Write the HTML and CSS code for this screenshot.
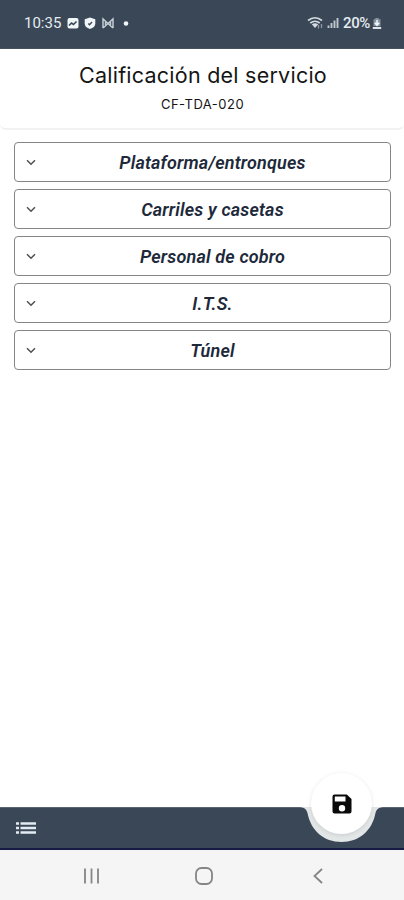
FILE: index.html
```html
<!DOCTYPE html>
<html lang="es">
<head>
<meta charset="utf-8">
<title>Calificación del servicio</title>
<link rel="stylesheet" href="styles.css">
</head>
<body>
<div class="screen">
  <div class="status">
    <span class="clock">10:35</span>
    <svg class="notices" width="66" height="14" viewBox="0 0 66 14">
      <rect x="1.500" y="2" width="11" height="10.500" rx="2" fill="#f0f5f8"/>
      <path d="M3 9.500l2.500-2.500 2 1.500 3-3" fill="none" stroke="#394757" stroke-width="1.600"/>
      <path d="M24 1.500l5.300 1.800v4c0 3-2 4.800-5.300 5.700-3.300-.9-5.300-2.700-5.300-5.700v-4z" fill="#f0f5f8"/>
      <path d="M22.300 7.500l1.200 1.300L26 6" fill="none" stroke="#394757" stroke-width="1.400"/>
      <path d="M37 12V3l5 4.500L47 3v9M37 12l5-4.500 5 4.500M39.500 11V5M44.500 11V5" fill="none" stroke="#c3ccd3" stroke-width="1.500"/>
      <circle cx="60" cy="7.500" r="2.300" fill="#f0f5f8"/>
    </svg>
    <svg class="signal" width="34" height="14" viewBox="0 0 34 14">
      <g fill="none" stroke="#d4dce1" stroke-width="1.700">
        <path d="M1 4.500Q8-1 15 4.500M3.300 7Q8 3.500 12.700 7"/>
      </g>
      <path d="M4.800 8.300Q8 6.200 11.200 8.300L8 12z" fill="#d4dce1"/>
      <path d="M11.500 12.500V9M14.500 8v4" stroke="#8d9aa5" stroke-width="1.300"/>
      <path d="M21.500 12V9.500M24.500 12V7M27.500 12V4.500M30.500 12V2" stroke="#bec8cf" stroke-width="1.900"/>
    </svg>
    <span class="level">20%</span>
    <svg class="battery" width="10" height="13" viewBox="0 0 10 13">
      <path d="M3.300 1h3.400v1.200H8.500v7h-7v-7h1.800z" fill="#8794a0"/>
      <path d="M5 3v5M2.800 5.800L5 8.300l2.200-2.500" fill="none" stroke="#f0f5f8" stroke-width="1.600"/>
      <path d="M.8 11h8.400" stroke="#dfe5e9" stroke-width="2"/>
    </svg>
  </div>
  <header class="header">
    <h1 class="title">Calificación del servicio</h1>
    <p class="code">CF-TDA-020</p>
  </header>
  <main class="list">
    <div class="item"><svg class="chevron" width="10" height="7" viewBox="0 0 10 7"><path d="M1 1.200l4 4 4-4"/></svg><span class="label">Plataforma/entronques</span></div>
    <div class="item"><svg class="chevron" width="10" height="7" viewBox="0 0 10 7"><path d="M1 1.200l4 4 4-4"/></svg><span class="label">Carriles y casetas</span></div>
    <div class="item"><svg class="chevron" width="10" height="7" viewBox="0 0 10 7"><path d="M1 1.200l4 4 4-4"/></svg><span class="label">Personal de cobro</span></div>
    <div class="item"><svg class="chevron" width="10" height="7" viewBox="0 0 10 7"><path d="M1 1.200l4 4 4-4"/></svg><span class="label">I.T.S.</span></div>
    <div class="item"><svg class="chevron" width="10" height="7" viewBox="0 0 10 7"><path d="M1 1.200l4 4 4-4"/></svg><span class="label">Túnel</span></div>
  </main>
  <footer class="bar">
    <svg class="menu" width="20" height="12" viewBox="0 0 20 12">
      <path d="M0 1.500h3M0 6h3M0 10.500h3M4.500 1.500H20M4.500 6H20M4.500 10.500H20" stroke="#e4eaf2" stroke-width="2.300"/>
    </svg>
    <svg class="notch" width="90" height="42" viewBox="0 0 90 42">
      <path d="M3 0C8 .5 9.500 2.500 10.500 6C14 24 27 35 44.500 35S75 24 78.500 6C79.500 2.500 81 .5 86 0z" fill="#e3e6e7"/>
    </svg>
    <button class="save" aria-label="Guardar">
      <svg width="20" height="20" viewBox="0 0 20 20">
        <path fill="#090909" fill-rule="evenodd" d="M2.500.5h12.300L19.500 5v12.500a2 2 0 0 1-2 2h-15a2 2 0 0 1-2-2v-15a2 2 0 0 1 2-2zM2.800 2.500v5h10.700v-5zM10 11a3.200 3.200 0 1 0 0 6.400 3.200 3.200 0 0 0 0-6.400z"/>
      </svg>
    </button>
  </footer>
  <nav class="nav">
    <svg width="18" height="18" viewBox="0 0 18 18"><path d="M2 1.500v15M8.500 1.500v15M15 1.500v15"/></svg>
    <svg class="home" width="20" height="20" viewBox="0 0 20 20"><rect x="2" y="2" width="16" height="16" rx="5.500"/></svg>
    <svg width="12" height="18" viewBox="0 0 12 18"><path d="M10 2L2.500 9l7.500 7"/></svg>
  </nav>
</div>
</body>
</html>
```
FILE: styles.css
```css
* { box-sizing: border-box; }
body { margin: 0; background: #fff; font-family: Roboto, sans-serif; }
.screen { display: flex; flex-direction: column; width: 404px; height: 900px; overflow: hidden; }
.status { display: flex; align-items: center; height: 49px; padding: 0 22px 2px 24px; background: #394757; border-bottom: 1px solid #46515e; color: #e6ecf0; font-size: 15px; font-weight: 400; }
.clock { width: 42px; white-space: nowrap; }
.signal { margin-left: auto; }
.level { width: 28px; margin-left: 2px; font-size: 15px; font-weight: 500; letter-spacing: -0.400px; }
.battery { margin-left: 1px; }
.header { height: 81px; padding-top: 10px; border-bottom: 2px solid #f1f1f2; border-radius: 0 0 6px 6px; text-align: center; color: #151515; }
.title, .code { margin: 0; font-family: Inter, sans-serif; font-weight: 400; white-space: nowrap; }
.title { padding-left: 2px; font-size: 21.500px; line-height: 32px; letter-spacing: 0.240px; }
.code { margin-top: 3px; padding-left: 1px; font-size: 13px; line-height: 20px; letter-spacing: 0.480px; }
.list { display: flex; flex: 1; flex-direction: column; gap: 7px; padding: 12px 13px 0 14px; }
.item { display: flex; align-items: center; height: 40px; padding: 0 10px 0 11px; border: 1px solid #858585; border-radius: 4px; }
.chevron { fill: none; stroke: #505050; stroke-width: 1.500; }
.label { flex: 1; padding: 2px 0 0 9px; text-align: center; color: #20293a; font-size: 18px; font-style: italic; font-weight: 600; line-height: 22px; letter-spacing: 0.180px; white-space: nowrap; }
.bar { position: relative; display: flex; align-items: center; height: 43px; padding-left: 16px; background: #394757; border-top: 1px solid #5b6571; border-bottom: 2px solid #151b45; }
.notch { position: absolute; left: 297px; top: -1px; }
.save { position: absolute; left: 311px; top: -35px; display: flex; align-items: center; justify-content: center; width: 61px; height: 61px; padding: 0; border: 0; border-radius: 50%; background: #fff; box-shadow: 0 1px 4px #0000001c; }
.nav { display: flex; align-items: center; justify-content: space-between; height: 50px; padding: 2px 80px 0 83px; background: #f5f5f5; fill: none; stroke: #858585; stroke-width: 1.800; }
.home { margin-right: 5px; }
```
